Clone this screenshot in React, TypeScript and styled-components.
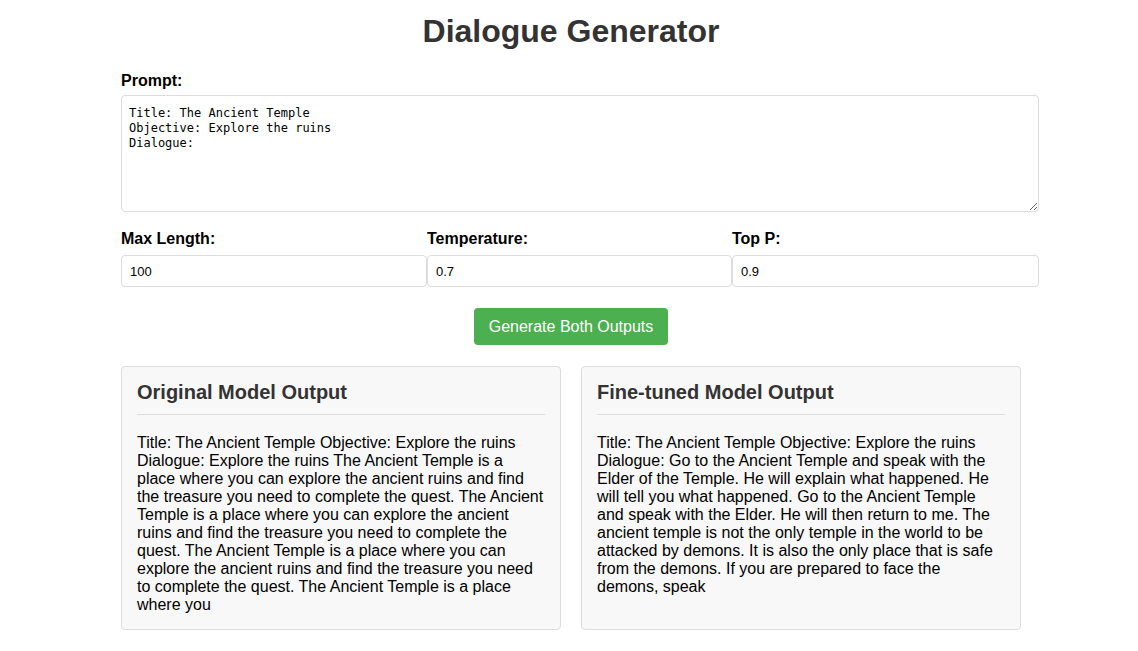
import React from "react";
import styled, { createGlobalStyle } from "styled-components";

const Global = createGlobalStyle`
  html, body { margin: 0; padding: 0; background: #fff; }
  body { font-family: "Liberation Sans", Arial, sans-serif; color: #000; }
  * { box-sizing: border-box; }
`;

const Page = styled.div`
  width: 904px;
  margin: 0 auto;
  padding: 13px 0 20px 4px;
`;

const Title = styled.h1`
  margin: 0 0 22px;
  font-size: 32px;
  font-weight: bold;
  color: #333;
  text-align: center;
  line-height: 37px;
`;

const Form = styled.div`
  width: 918px;
`;

const Label = styled.label<{ $gap?: number }>`
  display: block;
  font-size: 16px;
  line-height: 18px;
  font-weight: bold;
  margin-bottom: ${(p) => p.$gap ?? 7}px;
`;

const PromptArea = styled.textarea`
  display: block;
  width: 100%;
  height: 117px;
  padding: 10px 7px 8px;
  border: 1px solid #ddd;
  border-radius: 4px;
  font-family: "DejaVu Sans Mono", "Liberation Mono", monospace;
  font-size: 12px;
  line-height: 15px;
  color: #000;
  margin: 0 0 18px;
`;

const ParamRow = styled.div`
  display: grid;
  grid-template-columns: 306px 305px 307px;
`;

const Field = styled.div`
  display: flex;
  flex-direction: column;
`;

const NumInput = styled.input`
  width: 100%;
  height: 32px;
  padding: 0 8px;
  border: 1px solid #ddd;
  border-radius: 4px;
  font-family: "Liberation Sans", Arial, sans-serif;
  font-size: 13px;
  color: #000;
`;

const ButtonRow = styled.div`
  display: flex;
  justify-content: center;
  width: 900px;
  margin: 21px 0 21px;
`;

const GenButton = styled.button`
  background: #4caf50;
  color: #fff;
  border: none;
  border-radius: 4px;
  padding: 0 15px;
  height: 37px;
  font-family: "Liberation Sans", Arial, sans-serif;
  font-size: 16px;
  cursor: pointer;
`;

const Outputs = styled.div`
  display: grid;
  grid-template-columns: 1fr 1fr;
  gap: 20px;
`;

const OutputBox = styled.div`
  background: #f8f8f8;
  border: 1px solid #ddd;
  border-radius: 4px;
  padding: 14px 15px 15px;
`;

const OutputHeading = styled.h3`
  margin: 0 0 19px;
  padding-bottom: 10px;
  border-bottom: 1px solid #ddd;
  font-size: 20px;
  line-height: 23px;
  font-weight: bold;
  color: #333;
`;

const OutputText = styled.div`
  font-size: 16px;
  line-height: 18px;
  color: #000;
`;

const original =
  "Title: The Ancient Temple Objective: Explore the ruins Dialogue: Explore the ruins The Ancient Temple is a place where you can explore the ancient ruins and find the treasure you need to complete the quest. The Ancient Temple is a place where you can explore the ancient ruins and find the treasure you need to complete the quest. The Ancient Temple is a place where you can explore the ancient ruins and find the treasure you need to complete the quest. The Ancient Temple is a place where you";

const finetuned =
  "Title: The Ancient Temple Objective: Explore the ruins Dialogue: Go to the Ancient Temple and speak with the Elder of the Temple. He will explain what happened. He will tell you what happened. Go to the Ancient Temple and speak with the Elder. He will then return to me. The ancient temple is not the only temple in the world to be attacked by demons. It is also the only place that is safe from the demons. If you are prepared to face the demons, speak";

export default function App() {
  return (
    <>
      <Global />
      <Page>
        <Title>Dialogue Generator</Title>
        <Form>
          <Label $gap={5}>Prompt:</Label>
          <PromptArea
            defaultValue={"Title: The Ancient Temple\nObjective: Explore the ruins\nDialogue:"}
          />
          <ParamRow>
            <Field>
              <Label>Max Length:</Label>
              <NumInput type="text" defaultValue="100" />
            </Field>
            <Field>
              <Label>Temperature:</Label>
              <NumInput type="text" defaultValue="0.7" />
            </Field>
            <Field>
              <Label>Top P:</Label>
              <NumInput type="text" defaultValue="0.9" />
            </Field>
          </ParamRow>
        </Form>
        <ButtonRow>
          <GenButton>Generate Both Outputs</GenButton>
        </ButtonRow>
        <Outputs>
          <OutputBox>
            <OutputHeading>Original Model Output</OutputHeading>
            <OutputText>{original}</OutputText>
          </OutputBox>
          <OutputBox>
            <OutputHeading>Fine-tuned Model Output</OutputHeading>
            <OutputText>{finetuned}</OutputText>
          </OutputBox>
        </Outputs>
      </Page>
    </>
  );
}
